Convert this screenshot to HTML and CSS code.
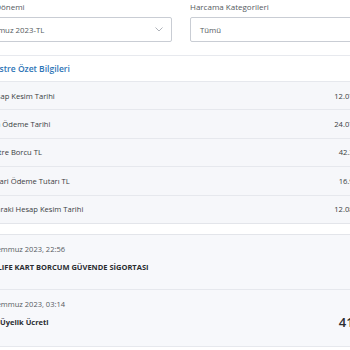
FILE: index.html
```html
<!DOCTYPE html>
<html lang="tr">
<head>
<meta charset="utf-8">
<link rel="stylesheet" href="styles.css">
</head>
<body>
<div class="page">
  <section class="filters">
    <div class="field">
      <div class="label">Ekstre Dönemi</div>
      <div class="select">
        <span>Temmuz 2023-TL</span>
        <svg class="chev" width="8" height="5" viewBox="0 0 8 5"><path d="M0.5 0.5 L4 4 L7.5 0.5" fill="none" stroke="#9aa0a8" stroke-width="0.8"/></svg>
      </div>
    </div>
    <div class="field">
      <div class="label">Harcama Kategorileri</div>
      <div class="select"><span>Tümü</span></div>
    </div>
  </section>
  <h2 class="title">Ekstre Özet Bilgileri</h2>
  <div class="rows">
    <div class="row"><span>Hesap Kesim Tarihi</span><span>12.07.2023</span></div>
    <div class="row"><span>Son Ödeme Tarihi</span><span>24.07.2023</span></div>
    <div class="row"><span>Ekstre Borcu TL</span><span>42.318,50</span></div>
    <div class="row"><span>Asgari Ödeme Tutarı TL</span><span>16.927,40</span></div>
    <div class="row"><span>Sonraki Hesap Kesim Tarihi</span><span>12.08.2023</span></div>
  </div>
  <div class="spacer"></div>
  <div class="txlist">
    <div class="tx">
      <div class="date">01 Temmuz 2023, 22:56</div>
      <div class="name">METLIFE KART BORCUM GÜVENDE SİGORTASI</div>
    </div>
    <div class="tx tall">
      <div class="date">01 Temmuz 2023, 03:14</div>
      <div class="name">Kart Üyelik Ücreti</div>
      <div class="amount">41,99</div>
    </div>
  </div>
</div>
</body>
</html>
```
FILE: styles.css
```css
html, body {
  margin: 0;
  padding: 0;
  background: #ffffff;
  overflow: hidden;
}
body {
  font-family: "Open Sans", "Noto Sans", sans-serif;
  color: #333;
  width: 350px;
  height: 350px;
}
.page {
  width: 420px;
  margin-left: -28px;
}
.filters {
  display: grid;
  grid-template-columns: 200px 200px;
  column-gap: 18px;
  padding-top: 2px;
  padding-bottom: 13px;
  border-bottom: 1px solid #e7e9ee;
}
.label {
  font-size: 8px;
  line-height: 10px;
  color: #555a60;
  margin-bottom: 5px;
  margin-left: -2px;
}
.select {
  box-sizing: border-box;
  height: 25px;
  border: 1px solid #c9cdd4;
  border-radius: 2px;
  display: flex;
  align-items: center;
  justify-content: space-between;
  padding: 0 8px 0 9px;
  font-size: 7.8px;
  color: #555a60;
}
.field + .field .label { margin-left: 0; }
.chev { display: block; }
.title {
  margin: 0;
  height: 25px;
  line-height: 25px;
  font-size: 8.5px;
  font-weight: 600;
  color: #2d74b6;
  padding-left: 18px;
}
.rows {
  background: #f6f7fa;
  border-bottom: 1px solid #e3e5ea;
}
.row {
  box-sizing: border-box;
  height: 28.4px;
  border-top: 1px solid #e6e8ed;
  display: flex;
  align-items: center;
  justify-content: space-between;
  padding: 0 19px 0 15px;
  font-size: 7.6px;
  color: #3a3d42;
}
.spacer { height: 10px; }
.txlist {
  border-top: 1px solid #e3e5ea;
  background: #f7f8fb;
}
.tx {
  box-sizing: border-box;
  height: 55px;
  border-bottom: 1px solid #e6e8ed;
  padding: 9px 17px 0 10px;
  display: grid;
  grid-template-columns: 1fr auto;
  grid-template-rows: 10px 10px;
  row-gap: 8px;
  align-items: center;
}
.tx.tall { height: 57px; }
.date {
  grid-column: 1;
  font-size: 7.5px;
  color: #555a60;
  line-height: 10px;
}
.name {
  grid-column: 1;
  font-size: 7.5px;
  font-weight: 700;
  color: #2a2d31;
  line-height: 10px;
}
.amount {
  grid-column: 2;
  grid-row: 2;
  font-size: 13px;
  font-weight: 600;
  color: #2a2d31;
  line-height: 14px;
  margin-right: 3px;
}
```
